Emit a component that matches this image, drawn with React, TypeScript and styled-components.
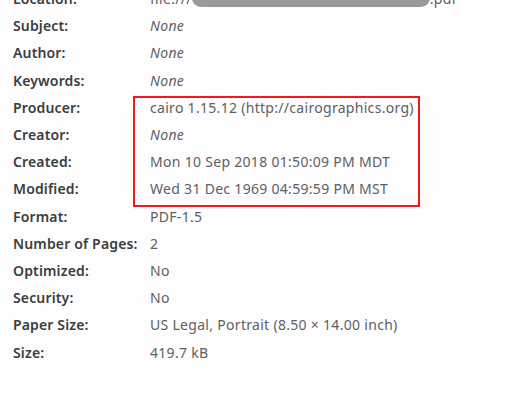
import styled, { createGlobalStyle } from "styled-components";

const GlobalStyle = createGlobalStyle`
  html, body {
    margin: 0;
    padding: 0;
    background: #fdfdfd;
  }
  body {
    font-family: "Noto Sans", "Open Sans", sans-serif;
    overflow: hidden;
  }
`;

interface Field {
  label: string;
  value: string;
  muted?: boolean;
}

const fields: Field[] = [
  { label: "Subject:", value: "None", muted: true },
  { label: "Author:", value: "None", muted: true },
  { label: "Keywords:", value: "None", muted: true },
  { label: "Producer:", value: "cairo 1.15.12 (http://cairographics.org)" },
  { label: "Creator:", value: "None", muted: true },
  { label: "Created:", value: "Mon 10 Sep 2018 01:50:09 PM MDT" },
  { label: "Modified:", value: "Wed 31 Dec 1969 04:59:59 PM MST" },
  { label: "Format:", value: "PDF-1.5" },
  { label: "Number of Pages:", value: "2" },
  { label: "Optimized:", value: "No" },
  { label: "Security:", value: "No" },
  { label: "Paper Size:", value: "US Legal, Portrait (8.50 × 14.00 inch)" },
  { label: "Size:", value: "419.7 kB" },
];

const Properties = () => {
  return (
    <Page>
      <GlobalStyle />
      <Grid>
        <Label>Location:</Label>
        <Value>
          file:///<Redacted />.pdf
        </Value>
        {fields.map((f) => (
          <Row key={f.label}>
            <Label>{f.label}</Label>
            <Value $italic={f.muted}>{f.value}</Value>
          </Row>
        ))}
      </Grid>
      <Highlight />
    </Page>
  );
};
export default Properties;

const Page = styled.main`
  position: relative;
  width: 526px;
  height: 394px;
  overflow: hidden;
`;

const Grid = styled.section`
  display: grid;
  grid-template-columns: 137px auto;
  grid-auto-rows: 27.2px;
  align-items: center;
  margin-top: -15px;
  padding-left: 13px;
`;

const Row = styled.div`
  display: contents;
`;

const Label = styled.span`
  font-size: 14px;
  font-weight: 600;
  letter-spacing: 0.15px;
  color: #3a3d40;
  white-space: nowrap;
`;

const Value = styled.span<{ $italic?: boolean }>`
  display: flex;
  align-items: center;
  font-size: 14px;
  letter-spacing: 0.3px;
  color: #5e6063;
  font-style: ${(p) => (p.$italic ? "italic" : "normal")};
  white-space: nowrap;
`;

const Redacted = styled.span`
  display: inline-block;
  width: 238px;
  height: 26px;
  margin-top: -10px;
  background: #9a9a9a;
  border-radius: 0 0 9px 9px;
`;

/* red annotation drawn over the producer/date rows */
const Highlight = styled.div`
  position: absolute;
  left: 133px;
  top: 96px;
  width: 283px;
  height: 107px;
  border: 2px solid #f01a1a;
  pointer-events: none;
`;
